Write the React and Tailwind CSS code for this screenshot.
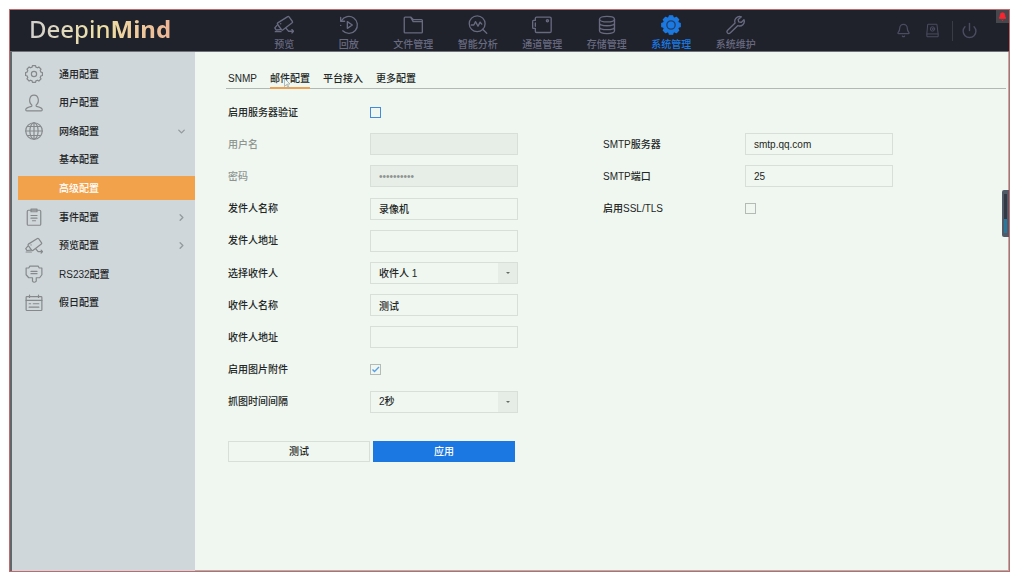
import React from 'react';
import { Bell, ChevronDown, ChevronRight, Power } from 'lucide-react';
import clsx from 'clsx';

const gearPath = (outer, inner) => {
  const points = [];
  for (let i = 0; i < 8; i++) {
    const mid = (i * Math.PI) / 4;
    [[-0.27, inner], [-0.18, outer], [0.18, outer], [0.27, inner]].forEach(([offset, r]) => {
      const x = 12 + r * Math.sin(mid + offset);
      const y = 12 - r * Math.cos(mid + offset);
      points.push(`${x.toFixed(2)} ${y.toFixed(2)}`);
    });
  }
  return `M${points.join('L')}Z`;
};

const Icon = ({ className = 'size-5', children }) => (
  <svg
    viewBox="0 0 24 24"
    className={className}
    fill="none"
    stroke="currentColor"
    strokeWidth="1.6"
    strokeLinecap="round"
    strokeLinejoin="round"
    aria-hidden="true"
  >
    {children}
  </svg>
);

const CameraIcon = (props) => (
  <Icon {...props}>
    <path d="M4.500 9.500 16.500 2q1-.6 1.600.3l4 5.500q.6.9-.3 1.500L10.500 18q-.9.600-1.500-.3l-4.800-6.600q-.6-1 .3-1.600Z" />
    <path d="M3.500 12.500 1 15.500l1.500 2.500 5.500-.500M1.500 20h7M14.500 16l3 3.500H23M21.500 17.500l2 2-2 2" />
    <path d="M8 10.500h.1" />
  </Icon>
);

const ReplayIcon = (props) => (
  <Icon {...props}>
    <path d="M3 6.800A10.200 10.200 0 1 1 4.500 19" />
    <path d="M2 3v4.500h4.700M2 12.500h.1" />
    <path d="M10 8v8l6-4Z" />
  </Icon>
);

const FolderIcon = (props) => (
  <Icon {...props}>
    <path d="M1.500 20.500v-17q0-1 1-1h6.700l3 3h10q1 0 1 1v14q0 1-1 1h-19.700q-1 0-1-1ZM9.200 2.500l3 5.500h11" />
  </Icon>
);

const AnalysisIcon = (props) => (
  <Icon {...props}>
    <circle cx="11" cy="10.500" r="9.500" />
    <path d="m17.500 17 5 5M4 12h3l2-4 3 5.500 2.500-5 2 2.500" />
  </Icon>
);

const ChannelIcon = (props) => (
  <Icon {...props}>
    <path d="M4 6.500V4q0-1.500 1.500-1.500h16Q23 2.500 23 4v15.500q0 1.500-1.500 1.500h-16Q4 21 4 19.500V16H1.500Q.8 16 .8 15V8Q.8 6.500 1.500 6.500H4M4 9.500v4" />
    <circle cx="18.500" cy="7" r="1.300" />
  </Icon>
);

const StorageIcon = (props) => (
  <Icon {...props}>
    <ellipse cx="12" cy="5" rx="9" ry="3.300" />
    <path d="M3 5v14c0 4.400 18 4.400 18 0V5M3 9.700c0 4.300 18 4.300 18 0M3 14.400c0 4.300 18 4.300 18 0" />
  </Icon>
);

const SystemIcon = (props) => (
  <Icon {...props}>
    <path d={gearPath(11.2, 9.2)} fill="currentColor" />
    <circle cx="12" cy="12" r="5" stroke="#1f3f6e" />
  </Icon>
);

const WrenchIcon = (props) => (
  <Icon {...props}>
    <path d="M18.500 2.200c-5-1.600-9.300 2.800-7.600 7.300L2 18.300c-1.200 1.200-1 2.300-.2 3.200 1 1 2.300 1 3.200 0l9-8.700c4.800 1.600 9.300-2.400 7.600-7.100l-3.400 3.200-3-.6-.6-2.800Z" />
  </Icon>
);

const AlarmPanelIcon = (props) => (
  <Icon {...props}>
    <path d="M5 2h14l2 15v5H3v-5ZM3 17.500h18" />
    <circle cx="12" cy="9.500" r="3.500" />
    <circle cx="12" cy="9.500" r="1" />
  </Icon>
);

const GearIcon = (props) => (
  <Icon {...props}>
    <path d={gearPath(11.4, 9.5)} />
    <circle cx="12" cy="12" r="3.500" />
  </Icon>
);

const UserIcon = (props) => (
  <Icon {...props}>
    <path d="M9 14.500C4.500 11 5.500 1.500 12 1.500S19.500 11 15 14.500c-.6 1.500 0 2 1.500 2.300 4.500 1 6.500 2 6.500 4.200 0 1-.5 1.500-1.500 1.500h-19c-1 0-1.500-.5-1.500-1.500 0-2.200 2-3.200 6.500-4.200 1.500-.3 2.100-.8 1.500-2.300Z" />
  </Icon>
);

const GlobeIcon = (props) => (
  <Icon {...props}>
    <circle cx="12" cy="12" r="11" />
    <ellipse cx="12" cy="12" rx="5.500" ry="11" />
    <path d="M12 1v22M1 12h22M3 6h18M3 18h18" />
  </Icon>
);

const EventIcon = (props) => (
  <Icon {...props}>
    <rect x="3" y="3" width="18" height="20" rx="1.500" />
    <path d="M8 1.500h8v3.500H8ZM8 10h8M8 13.500h8M10 17h4" />
  </Icon>
);

const SerialIcon = (props) => (
  <Icon {...props}>
    <path d="M6.500 1.500h11L19 4h3.500v9l-3 4h-4.500v4.500q-3 3-5 0V17H5l-3.500-4V4H5ZM8 8.500h8M8 11.500h8" />
  </Icon>
);

const HolidayIcon = (props) => (
  <Icon {...props}>
    <rect x="1.500" y="3.500" width="21" height="18.500" rx="1" />
    <path d="M1.500 8.500h21M6 1.500v3M18 1.500v3M5.500 13h2M11 13h7.500M5.500 17.500h13" />
  </Icon>
);

const navItems = [
  { label: '预览', icon: CameraIcon },
  { label: '回放', icon: ReplayIcon },
  { label: '文件管理', icon: FolderIcon },
  { label: '智能分析', icon: AnalysisIcon },
  { label: '通道管理', icon: ChannelIcon },
  { label: '存储管理', icon: StorageIcon },
  { label: '系统管理', icon: SystemIcon, active: true },
  { label: '系统维护', icon: WrenchIcon },
];

const menuItems = [
  { label: '通用配置', icon: GearIcon },
  { label: '用户配置', icon: UserIcon },
  { label: '网络配置', icon: GlobeIcon, arrow: 'down' },
  { label: '基本配置' },
  { label: '高级配置', active: true },
  { label: '事件配置', icon: EventIcon, arrow: 'right' },
  { label: '预览配置', icon: CameraIcon, arrow: 'right' },
  { label: 'RS232配置', icon: SerialIcon },
  { label: '假日配置', icon: HolidayIcon },
];

const tabs = ['SNMP', '邮件配置', '平台接入', '更多配置'];

const Header = () => (
  <header className="flex h-[42px] shrink-0 items-stretch border-b border-[#6f7377] bg-[#1f212b] text-[#686a80]">
    <div className="w-[242px] shrink-0 pl-[19px]">
      <span className="bg-linear-to-r from-[#d2cfcd] via-[#eee1a4] to-[#edb596] bg-clip-text font-['Noto_Sans'] text-[24px] leading-[38px] text-transparent">
        Deepin<b>Mind</b>
      </span>
    </div>
    <nav className="grid w-[516px] shrink-0 grid-cols-8">
      {navItems.map(({ label, icon: ItemIcon, active }) => (
        <a
          key={label}
          href="#"
          className={clsx('flex flex-col items-center pt-[5px]', active && 'text-[#1b79e0]')}
        >
          <ItemIcon className="size-5" />
          <span className="mt-1 leading-3">{label}</span>
        </a>
      ))}
    </nav>
    <div className="ml-auto flex items-center pr-[31px] text-[#4b4c62]">
      <button aria-label="报警"><Bell size={15} strokeWidth={2} /></button>
      <button aria-label="报警面板" className="ml-[14px]"><AlarmPanelIcon className="size-[15px]" /></button>
      <span className="ml-3 h-5 w-px bg-[#3a3b44]" />
      <button aria-label="关机" className="ml-2"><Power size={17} strokeWidth={2} /></button>
    </div>
  </header>
);

const Sidebar = () => (
  <aside className="w-[185px] shrink-0 border-l-2 border-[#5f676b] bg-[#d0d7da] pt-2">
    <ul className="grid h-[257px] auto-rows-fr">
      {menuItems.map(({ label, icon: ItemIcon, active, arrow }) => (
        <li key={label} className="flex items-center pl-[6px]">
          <a
            href="#"
            className={clsx(
              'flex h-6 flex-1 items-center pr-2',
              active ? 'bg-[#f2a24b] text-white' : 'text-[#222527]'
            )}
          >
            <span className="w-[41px] pl-[7px] text-[#85898b]">
              {ItemIcon && <ItemIcon className="size-[18px]" />}
            </span>
            <span className="flex-1">{label}</span>
            {arrow === 'down' && <ChevronDown size={11} strokeWidth={3} className="text-[#959b9d]" />}
            {arrow === 'right' && <ChevronRight size={11} strokeWidth={3} className="text-[#959b9d]" />}
          </a>
        </li>
      ))}
    </ul>
  </aside>
);

const Row = ({ id, label, muted, children }) => (
  <div className="flex items-center">
    <label htmlFor={id} className={clsx('w-[142px] shrink-0', muted && 'text-[#8e9490]')}>
      {label}
    </label>
    {children}
  </div>
);

const TextField = ({ id, label, disabled, type = 'text', value = '' }) => (
  <Row id={id} label={label} muted={disabled}>
    <input
      id={id}
      type={type}
      defaultValue={value}
      disabled={disabled}
      className="h-[22px] w-[148px] border border-[#d8dfd9] px-2 disabled:bg-[#e7ede7] disabled:text-[#8e9490]"
    />
  </Row>
);

const SelectField = ({ id, label, options }) => (
  <Row id={id} label={label}>
    <div className="relative">
      <select id={id} className="h-[22px] w-[148px] appearance-none border border-[#d8dfd9] px-2">
        {options.map((option) => <option key={option}>{option}</option>)}
      </select>
      <span className="pointer-events-none absolute inset-y-px right-px flex w-[19px] items-center justify-center bg-[#e6ece6]">
        <svg viewBox="0 0 6 3" className="h-[2px] w-[4px] fill-[#666b67]" preserveAspectRatio="none"><path d="M0 0h6L3 3Z" /></svg>
      </span>
    </div>
  </Row>
);

const CheckField = ({ id, label, checked, focused }) => (
  <Row id={id} label={label}>
    <span className="relative flex">
      <input
        id={id}
        type="checkbox"
        defaultChecked={checked}
        className={clsx(
          'peer size-[11px] appearance-none border',
          focused ? 'border-[#4389dc]' : 'border-[#b4bbb6]'
        )}
      />
      <svg
        viewBox="0 0 11 11"
        strokeWidth="1.4"
        className="pointer-events-none absolute inset-0 hidden size-[11px] fill-none stroke-[#5a9fe6] peer-checked:block"
      >
        <path d="m2.500 5.500 2 2 4.500-4.500" />
      </svg>
    </span>
  </Row>
);

const MailForm = () => (
  <form className="pl-[33px]" onSubmit={(e) => e.preventDefault()}>
    <div className="mt-[7px] flex">
      <div className="grid h-[322px] w-[375px] shrink-0 auto-rows-fr">
        <CheckField id="auth" label="启用服务器验证" focused />
        <TextField id="user" label="用户名" disabled />
        <TextField id="password" label="密码" type="password" value="**********" disabled />
        <TextField id="sender" label="发件人名称" value="录像机" />
        <TextField id="sender-address" label="发件人地址" />
        <SelectField id="receiver-select" label="选择收件人" options={['收件人 1', '收件人 2', '收件人 3']} />
        <TextField id="receiver" label="收件人名称" value="测试" />
        <TextField id="receiver-address" label="收件人地址" />
        <CheckField id="attachment" label="启用图片附件" checked />
        <SelectField id="interval" label="抓图时间间隔" options={['2秒', '3秒', '4秒', '5秒']} />
      </div>
      <div className="mt-8 grid h-[97px] auto-rows-fr">
        <TextField id="smtp" label="SMTP服务器" value="smtp.qq.com" />
        <TextField id="port" label="SMTP端口" value="25" />
        <CheckField id="ssl" label="启用SSL/TLS" />
      </div>
    </div>
    <div className="mt-[23px] flex gap-[3px]">
      <button type="button" className="h-[21px] w-[142px] border border-[#d8dfd9]">测试</button>
      <button type="submit" className="h-[21px] w-[142px] bg-[#1b78e2] text-white">应用</button>
    </div>
  </form>
);

export default function App() {
  return (
    <div className="flex min-h-screen bg-white pt-[9px] pr-[14px] pb-[9px] pl-[9px] font-['Liberation_Sans','Noto_Sans_CJK_SC',sans-serif] text-[10px] font-medium text-[#222624]">
      <div className="relative flex flex-1 flex-col border border-[#c4686c]">
        <Header />
        <div className="flex flex-1">
          <Sidebar />
          <main className="min-w-0 flex-1 border-r border-b border-[#aab3ae] bg-[#f0f7f1]">
            <div className="mr-[2px] ml-[31px] flex gap-[13px] border-b border-[#b2b9b4] pt-[18px] pl-[2px]">
              {tabs.map((tab) => (
                <button
                  key={tab}
                  className={clsx(
                    'relative -mb-px h-[19px] border-b-2 pb-px',
                    tab === '邮件配置' ? 'border-[#ee9f50]' : 'border-transparent'
                  )}
                >
                  {tab}
                  {tab === '邮件配置' && (
                    <svg viewBox="0 0 7 11" className="absolute top-2 left-[14px] h-[11px] w-[7px] fill-[#f0f7f1] stroke-[#9a9f9c]">
                      <path d="M.5.5v8l2-2 1.500 3.500 1-.5L3.500 6H6Z" strokeWidth=".7" />
                    </svg>
                  )}
                </button>
              ))}
            </div>
            <MailForm />
          </main>
        </div>
        <button aria-label="报警提示" className="absolute top-0 right-0 flex size-[13px] items-center justify-center bg-[#45474d]">
          <Bell size={9} className="fill-[#fa2530] text-[#fa2530]" />
        </button>
        <div className="absolute top-[180px] right-0 flex h-[47px] w-[7px] flex-col items-center rounded-l-xs bg-[#505b67] py-1">
          <span className="w-[3px] flex-1 bg-[#333a46]" />
          <span className="h-[14px] w-[3px] bg-[#29789b]" />
        </div>
      </div>
    </div>
  );
}
